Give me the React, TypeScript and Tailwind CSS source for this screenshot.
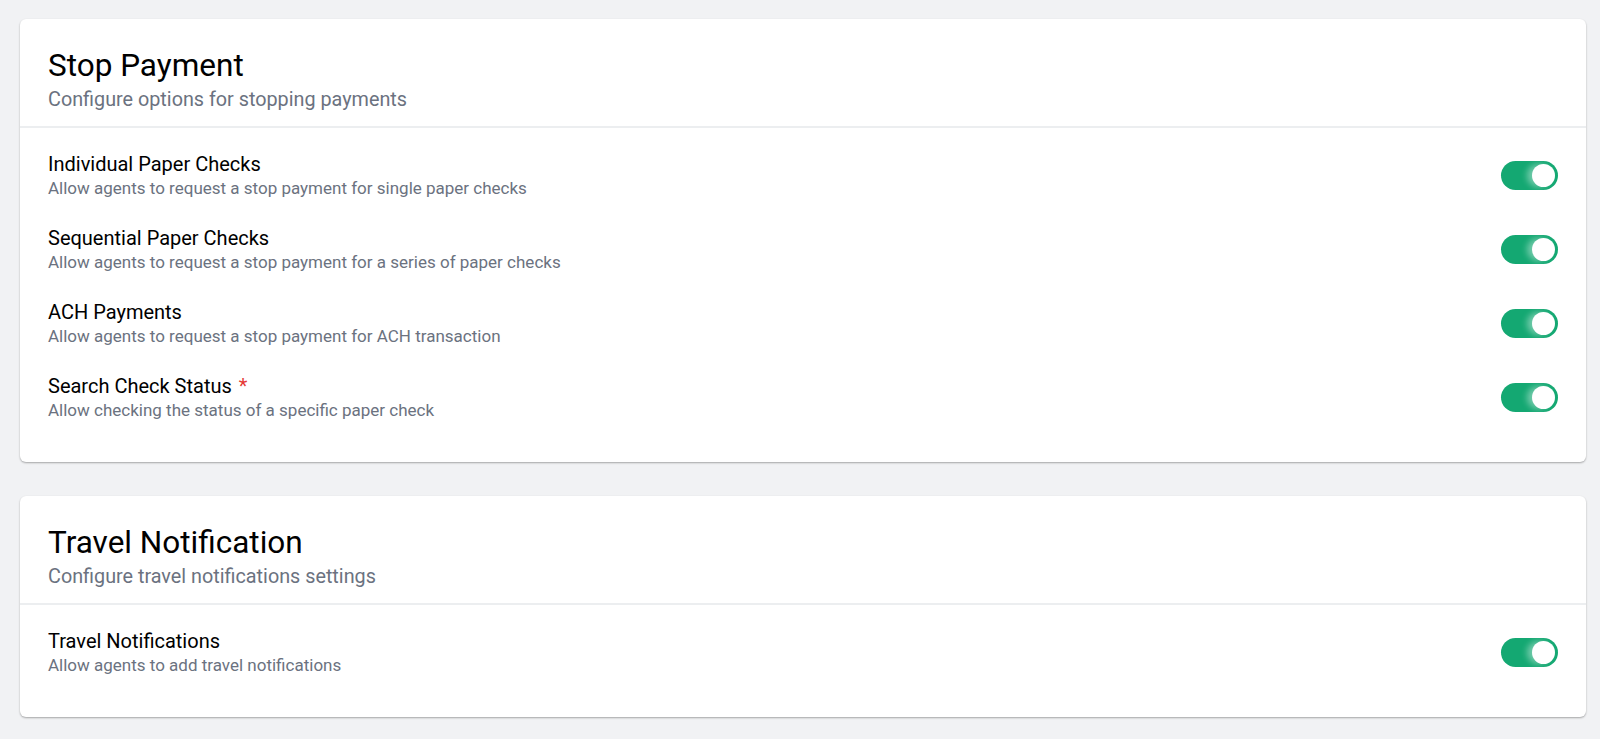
import { useState } from 'react'

type Setting = {
  id: string
  title: string
  description: string
  required?: boolean
}

type Section = {
  title: string
  subtitle: string
  settings: Setting[]
}

const SECTIONS: Section[] = [
  {
    title: 'Stop Payment',
    subtitle: 'Configure options for stopping payments',
    settings: [
      { id: 'individual', title: 'Individual Paper Checks', description: 'Allow agents to request a stop payment for single paper checks' },
      { id: 'sequential', title: 'Sequential Paper Checks', description: 'Allow agents to request a stop payment for a series of paper checks' },
      { id: 'ach', title: 'ACH Payments', description: 'Allow agents to request a stop payment for ACH transaction' },
      { id: 'search', title: 'Search Check Status', description: 'Allow checking the status of a specific paper check', required: true },
    ],
  },
  {
    title: 'Travel Notification',
    subtitle: 'Configure travel notifications settings',
    settings: [
      { id: 'travel', title: 'Travel Notifications', description: 'Allow agents to add travel notifications' },
    ],
  },
]

function Toggle({ on, onChange }: { on: boolean; onChange: () => void }) {
  return (
    <button
      type="button"
      role="switch"
      aria-checked={on}
      onClick={onChange}
      className={`relative shrink-0 w-[57px] h-[29px] rounded-full transition-colors ${
        on ? 'bg-[#14a872]' : 'bg-gray-300'
      }`}
    >
      <span
        className={`absolute top-[3px] h-[23px] w-[23px] rounded-full bg-white shadow-[-5px_0_6px_rgba(255,255,255,0.4)] transition-all ${
          on ? 'left-[31px]' : 'left-[3px]'
        }`}
      />
    </button>
  )
}

export default function App() {
  const [values, setValues] = useState<Record<string, boolean>>({
    individual: true,
    sequential: true,
    ach: true,
    search: true,
    travel: true,
  })

  return (
    <div className="min-h-screen bg-[#f1f2f4] pt-[19px] pb-8 pl-5 pr-[14px] font-['Roboto',sans-serif]">
      <div className="flex flex-col gap-[34px]">
        {SECTIONS.map((section) => (
          <div
            key={section.title}
            className="bg-white rounded-md shadow-[0_1px_2px_rgba(0,0,0,0.32)]"
          >
            <div className="px-7 pt-[29px] pb-[14px] border-b-2 border-[#eceef0]">
              <h2 className="text-[31.5px] leading-9 text-black">{section.title}</h2>
              <p className="text-[19.8px] leading-6 text-[#6b7280] mt-1">{section.subtitle}</p>
            </div>
            <div className="px-7 pt-[24px] pb-[41px] flex flex-col gap-[27px]">
              {section.settings.map((s) => (
                <div key={s.id} className="flex items-center justify-between">
                  <div>
                    <p className="text-[20px] leading-6 text-black">
                      {s.title}
                      {s.required && <span className="text-[#e53935] ml-[7px]">*</span>}
                    </p>
                    <p className="text-[17px] leading-[22px] text-[#6b7280] mt-[1px]">{s.description}</p>
                  </div>
                  <Toggle
                    on={values[s.id]}
                    onChange={() => setValues((v) => ({ ...v, [s.id]: !v[s.id] }))}
                  />
                </div>
              ))}
            </div>
          </div>
        ))}
      </div>
    </div>
  )
}
